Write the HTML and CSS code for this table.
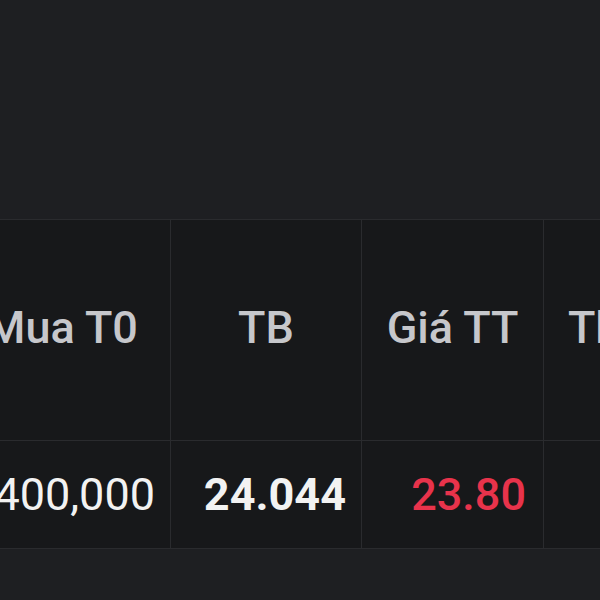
FILE: index.html
```html
<!DOCTYPE html>
<html lang="vi">
<head>
<meta charset="utf-8">
<link rel="stylesheet" href="styles.css">
</head>
<body>
<div class="top"></div>
<div class="table">
  <div class="cell head c1">Mua T0</div>
  <div class="cell head">TB</div>
  <div class="cell head">Giá TT</div>
  <div class="cell head c4">Thay đổi</div>
  <div class="cell data c1 regular">400,000</div>
  <div class="cell data bold">24.044</div>
  <div class="cell data red">23.80</div>
  <div class="cell data c4"></div>
</div>
</body>
</html>
```
FILE: styles.css
```css
html, body {
  margin: 0;
  padding: 0;
  background: #1e1f22;
  width: 600px;
  height: 600px;
  overflow: hidden;
  font-family: Roboto, "Liberation Sans", sans-serif;
}
.top {
  height: 219px;
}
.table {
  display: grid;
  grid-template-columns: 217px 191px 182px 200px;
  grid-template-rows: 221px 108px;
  margin-left: -46px;
  border-top: 1px solid #2a2b2e;
  width: 790px;
}
.cell {
  background: #17181a;
  border-right: 1px solid #2a2b2e;
  border-bottom: 1px solid #2a2b2e;
  display: flex;
  align-items: center;
  white-space: nowrap;
  overflow: hidden;
}
.head {
  justify-content: center;
  font-size: 45px;
  font-weight: 500;
  color: #c6c7cb;
  padding-bottom: 6px;
  box-sizing: border-box;
}
.c4.head {
  justify-content: flex-start;
  padding-left: 24px;
}
.data {
  justify-content: flex-end;
  padding-right: 15px;
  font-size: 45px;
  color: #f2f2f2;
}
.regular { font-weight: 400; }
.bold { font-weight: 700; }
.red {
  color: #e8334b;
  font-weight: 500;
  padding-right: 17px;
}
```
